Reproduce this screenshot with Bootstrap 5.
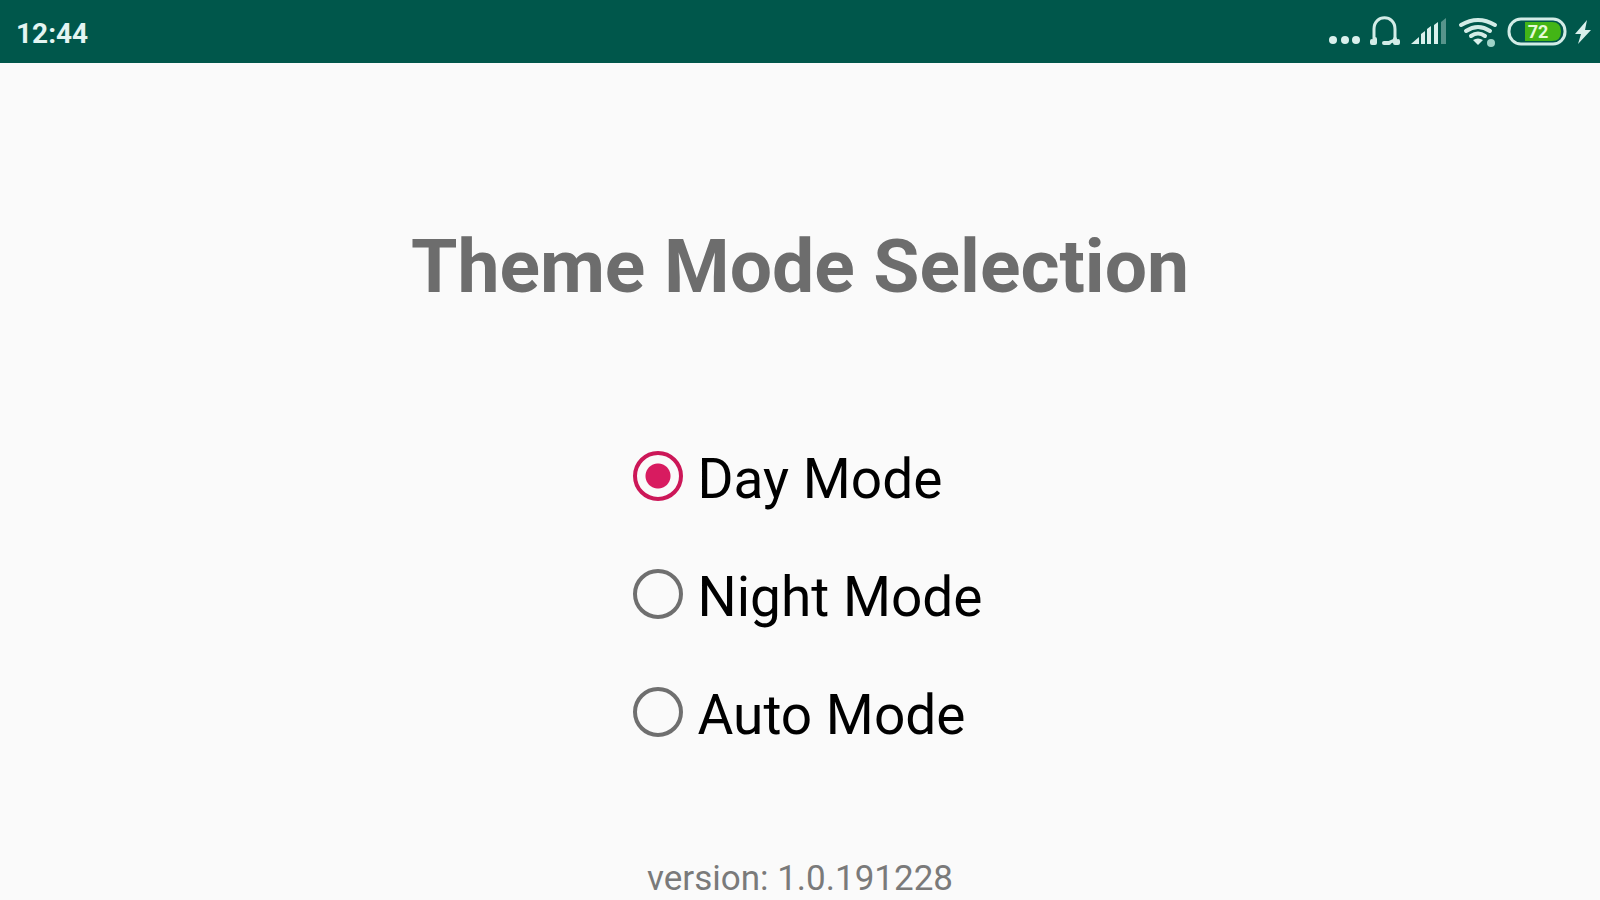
<!DOCTYPE html>
<html lang="en">
<head>
<meta charset="utf-8">
<meta name="viewport" content="width=device-width, initial-scale=1">
<title>Theme Mode Selection</title>
<link rel="stylesheet" href="https://cdn.jsdelivr.net/npm/bootstrap@5.3.0/dist/css/bootstrap.min.css">
<style>
  body { font-family: Roboto, "Liberation Sans", sans-serif; background: #fafafa; color: #000; }
  .status-bar { height: 63px; background: #00574b; color: #e4f5f2; padding: 4px 0 0 16px; }
  .clock { font-size: 28px; line-height: 32px; }
  .status-icons { width: 290px; height: 59px; }
  .battery-level { font: bold 18px Roboto, "Liberation Sans", sans-serif; }
  .screen-title { font-size: 75px; line-height: 88px; color: #6d6d6d; margin: 159px 0 0; }
  .modes { margin-top: 110px; }
  .mode-row { height: 118px; }
  .mode-row .form-check-input { width: 50px; height: 50px; margin: 0 15px 6px; border: 4px solid #6f6f6f; background: none; box-shadow: none; }
  .mode-row .form-check-input:checked { border-color: #cc1758; background: radial-gradient(circle, #d81b60 12px, transparent 13px); }
  .mode-row .form-check-label { font-size: 55px; line-height: 64px; }
  .version { font-size: 35px; line-height: 40px; color: #7a7a7a; margin-top: 85px; }
</style>
</head>
<body>
<header class="status-bar d-flex align-items-center justify-content-between">
  <time class="clock fw-bold">12:44</time>
  <svg class="status-icons" viewBox="1310 4 290 59" fill="none" stroke="#d3ece7" stroke-linecap="round" stroke-linejoin="round" aria-label="Status icons">
    <g fill="#d9f0ec" stroke="none">
      <circle cx="1333" cy="40" r="4"/><circle cx="1345" cy="40" r="4"/><circle cx="1356" cy="40" r="4"/>
    </g>
    <path d="M1374 40V29C1374 14 1395 14 1395 29V40L1388 43" stroke-width="3"/>
    <path d="M1372 41V43H1375V39M1398 41V43H1395V39M1384 43H1389" stroke-width="4"/>
    <g fill="#d9f0ec" stroke="none">
      <path d="M1411 44L1419 37V44Z"/>
      <path d="M1421 34L1425 31V44H1421ZM1427 29L1431 26V44H1427ZM1434 25L1438 22V44H1434Z"/>
      <path d="M1441 22L1446 18V44H1441Z" opacity=".4"/>
    </g>
    <path d="M1461 25Q1478 15 1495 25M1466 31Q1478 23 1490 31M1471 36Q1478 31 1485 36" stroke-width="4"/>
    <path d="M1473 40Q1478 37 1483 40L1478 45Z" fill="#d9f0ec" stroke="none"/>
    <circle cx="1491" cy="43" r="4" fill="#9ed3c8" stroke="none"/>
    <path d="M1525 22H1552Q1561 22 1561 31.500Q1561 41 1552 41H1525Z" fill="#43b516" stroke="none"/>
    <rect x="1509" y="19" width="56" height="25" rx="12" stroke-width="3"/>
    <text class="battery-level" x="1538" y="38" text-anchor="middle" fill="#e6fbd8" stroke="none">72</text>
    <path d="M1587 20L1575 34H1581L1578 44L1591 30H1585Z" fill="#d9f0ec" stroke="none"/>
  </svg>
</header>
<main class="container-fluid text-center">
  <h1 class="screen-title fw-bold">Theme Mode Selection</h1>
  <form class="modes d-flex justify-content-center">
    <div class="d-flex flex-column align-items-start">
      <div class="mode-row d-flex align-items-center">
        <input class="form-check-input" type="radio" name="mode" id="day" checked>
        <label class="form-check-label" for="day">Day Mode</label>
      </div>
      <div class="mode-row d-flex align-items-center">
        <input class="form-check-input" type="radio" name="mode" id="night">
        <label class="form-check-label" for="night">Night Mode</label>
      </div>
      <div class="mode-row d-flex align-items-center">
        <input class="form-check-input" type="radio" name="mode" id="auto">
        <label class="form-check-label" for="auto">Auto Mode</label>
      </div>
    </div>
  </form>
  <p class="version mb-0">version: 1.0.191228</p>
</main>
<script src="https://cdn.jsdelivr.net/npm/bootstrap@5.3.0/dist/js/bootstrap.bundle.min.js"></script>
</body>
</html>
